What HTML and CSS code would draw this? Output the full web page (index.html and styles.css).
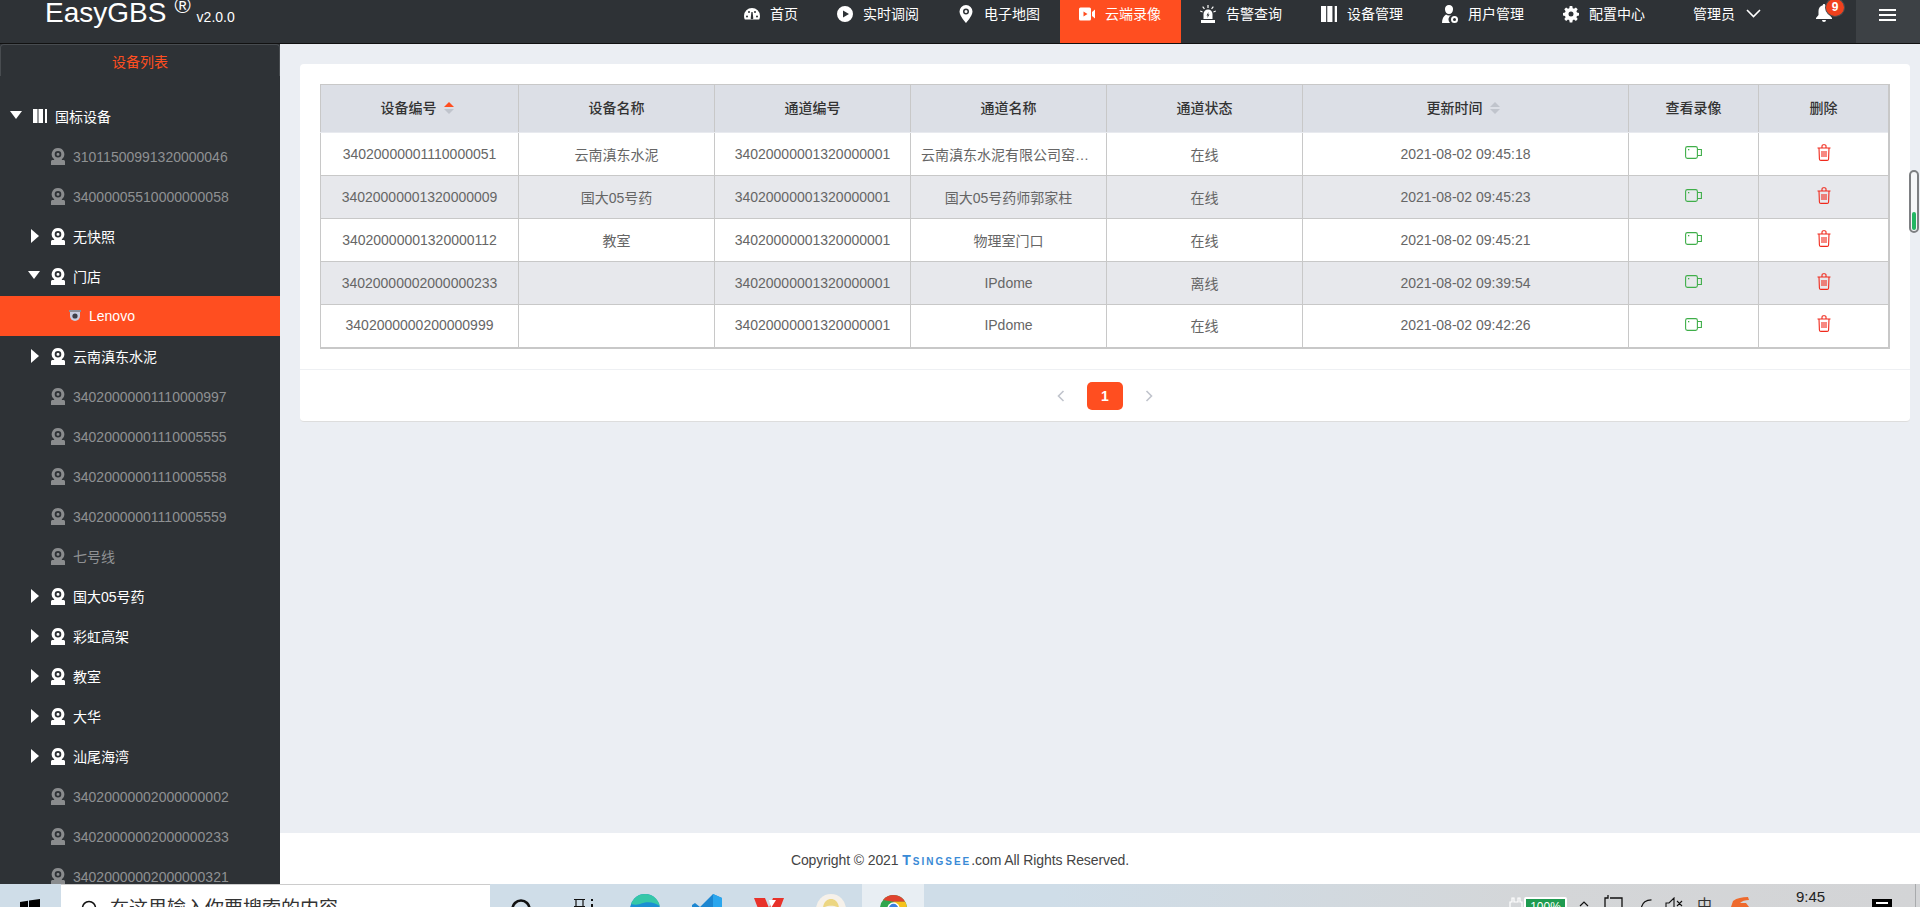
FILE: index.html
```html
<!DOCTYPE html>
<html lang="zh-CN">
<head>
  <meta charset="UTF-8">
  <title>EasyGBS</title>
  <link rel="stylesheet" href="styles.css">
</head>
<body>
  <svg class="defs" width="0" height="0">
    <symbol id="i-gauge" viewBox="0 0 16 16"><path fill-rule="evenodd" d="M8 2a8 8 0 0 0-8 8c0 1.500.3 2.700.8 3.500h14.400c.5-.8.8-2 .8-3.500a8 8 0 0 0-8-8zM3 9.500a1 1 0 1 1 0 2 1 1 0 0 1 0-2zM5 5a1 1 0 1 1 0 2 1 1 0 0 1 0-2zM11 5a1 1 0 1 1 0 2 1 1 0 0 1 0-2zM13 9.500a1 1 0 1 1 0 2 1 1 0 0 1 0-2zM8.600 6l.6 5.500a1.300 1.300 0 1 1-2.400 0L7.400 6z"/></symbol>
    <symbol id="i-play" viewBox="0 0 16 16"><path fill-rule="evenodd" d="M8 0a8 8 0 1 0 0 16A8 8 0 0 0 8 0zM6 4.500l6 3.500-6 3.500z"/></symbol>
    <symbol id="i-pin" viewBox="0 0 14 18"><path fill-rule="evenodd" d="M7 0a6.500 6.500 0 0 0-6.500 6.500C.5 11 7 18 7 18s6.500-7 6.500-11.500A6.500 6.500 0 0 0 7 0zm0 3.500a3 3 0 1 1 0 6 3 3 0 0 1 0-6zm0 1.500a1.500 1.500 0 1 0 0 3 1.500 1.500 0 0 0 0-3z"/></symbol>
    <symbol id="i-video" viewBox="0 0 16 13"><path fill-rule="evenodd" d="M1.500 0h9A1.500 1.500 0 0 1 12 1.500v10a1.500 1.500 0 0 1-1.500 1.500h-9A1.500 1.500 0 0 1 0 11.500v-10A1.500 1.500 0 0 1 1.500 0zM4.500 4v5L8.500 6.500zM13 4.500L16 2v9l-3-2.500z"/></symbol>
    <symbol id="i-alarm" viewBox="0 0 16 18"><path fill-rule="evenodd" d="M8 4.500A4.500 4.500 0 0 0 3.500 9v5h9V9A4.500 4.500 0 0 0 8 4.500zM8.500 7L6.500 10.500h1.300L7.300 13l2.200-3.500H8.200zM1 15h14v3H1zM7.400 0h1.200v3H7.400zM2.200 2l.9-.8 1.800 2.200-.9.8zM13.800 2l-.9-.8-1.800 2.200.9.8zM0 6.500l.4-1.100 2.400 1-.4 1.100zM16 6.500l-.4-1.100-2.400 1 .4 1.100z"/></symbol>
    <symbol id="i-book" viewBox="0 0 14 14"><path d="M0 0h4.500v14H0zM5.500 0h4.500v14H5.500zM12 0h2v14h-2z"/></symbol>
    <symbol id="i-user" viewBox="0 0 16 18"><path fill-rule="evenodd" d="M7 0a4 4 0 0 1 4 4.500C11 7 9.300 9 7 9S3 7 3 4.500A4 4 0 0 1 7 0zM4 9.500c.9.600 1.900 1 3 1 .9 0 1.700-.2 2.400-.6A5 5 0 0 0 8 18H0c0-4 1.500-7 4-8.500zM12.500 11a3.500 3.500 0 1 1 0 7 3.500 3.500 0 0 1 0-7zm0 2a1.500 1.500 0 1 0 0 3 1.500 1.500 0 0 0 0-3z"/></symbol>
    <symbol id="i-gear" viewBox="0 0 16 16"><path fill-rule="evenodd" d="M6.700 0h2.600l.4 2.200 1.300.6L12.900 1.500l1.800 1.800-1.300 1.900.6 1.300 2 .4v2.600l-2 .4-.6 1.300 1.300 1.900-1.800 1.800-1.900-1.300-1.300.6-.4 2.200H6.700l-.4-2.200-1.300-.6-1.900 1.300-1.800-1.800 1.300-1.900-.6-1.300-2-.4V6.900l2-.4.6-1.300-1.300-1.900 1.800-1.800L5 2.800l1.300-.6zM8 5.500a2.500 2.500 0 1 0 0 5 2.500 2.500 0 0 0 0-5z"/></symbol>
    <symbol id="i-cam" viewBox="0 0 14 17"><path fill-rule="evenodd" d="M7 0a6.300 6.300 0 0 1 3.700 11.400l.3.600h1.500c.8 0 1.500.7 1.500 1.500V17H0v-3.500C0 12.700.7 12 1.500 12H3l.3-.6A6.300 6.300 0 0 1 7 0zm0 3a3.300 3.300 0 1 0 0 6.600A3.300 3.300 0 0 0 7 3zm0 1.800a1.500 1.500 0 1 1 0 3 1.500 1.500 0 0 1 0-3z"/></symbol>
    <symbol id="i-rec" viewBox="0 0 17 13"><g fill="none" stroke="currentColor" stroke-width="1.100"><rect x=".6" y=".6" width="11.800" height="11.800" rx="1.800"/><path d="M12.500 3.500h3.900v6h-3.900"/></g><rect x="3" y="3" width="1.300" height="1.300" fill="currentColor"/></symbol>
    <symbol id="i-trash" viewBox="0 0 14 17"><g fill="none" stroke="currentColor" stroke-width="1.100"><path d="M.5 4h13M5 3.800V2a1.300 1.300 0 0 1 1.300-1.300h1.400A1.300 1.300 0 0 1 9 2v1.800"/><path d="M2 4l.4 11a1.500 1.500 0 0 0 1.500 1.400h6.200a1.500 1.500 0 0 0 1.500-1.400L12 4"/><path d="M5 7v6M7 7v6M9 7v6"/></g></symbol>
  </svg>

  <div class="app">
    <header class="topbar">
      <div class="logo">
        <span class="logo-name">EasyGBS</span>
        <span class="logo-reg">®</span>
        <span class="logo-ver">v2.0.0</span>
      </div>
      <nav class="nav">
        <a class="nav-item"><svg class="nav-icon"><use href="#i-gauge"/></svg>首页</a>
        <a class="nav-item"><svg class="nav-icon"><use href="#i-play"/></svg>实时调阅</a>
        <a class="nav-item"><svg class="nav-icon"><use href="#i-pin"/></svg>电子地图</a>
        <a class="nav-item active"><svg class="nav-icon"><use href="#i-video"/></svg>云端录像</a>
        <a class="nav-item"><svg class="nav-icon"><use href="#i-alarm"/></svg>告警查询</a>
        <a class="nav-item"><svg class="nav-icon"><use href="#i-book"/></svg>设备管理</a>
        <a class="nav-item"><svg class="nav-icon"><use href="#i-user"/></svg>用户管理</a>
        <a class="nav-item"><svg class="nav-icon"><use href="#i-gear"/></svg>配置中心</a>
      </nav>
      <div class="admin">管理员
        <svg class="admin-arrow" viewBox="0 0 15 9"><path d="M1 1l6.500 6.500L14 1" fill="none" stroke="#fff" stroke-width="1.600"/></svg>
      </div>
      <div class="bell">
        <svg class="bell-icon" viewBox="0 0 16 18"><path fill="#fff" d="M8 0c.7 0 1.200.5 1.200 1.200C11.800 1.800 13.500 4 13.500 7v4L16 14v1H0v-1l2.500-3V7c0-3 1.700-5.200 4.300-5.800C6.800.5 7.300 0 8 0zM6 16h4a2 2 0 0 1-4 0z"/></svg>
        <span class="badge">9</span>
      </div>
      <div class="burger"><span></span><span></span><span></span></div>
    </header>

    <div class="body-row">
      <aside class="sidebar">
        <div class="side-tab">设备列表</div>
        <ul class="tree" id="tree"></ul>
      </aside>

      <main class="main">
        <div class="content">
          <section class="card">
            <div class="table-wrap">
              <table class="grid">
                <thead>
                  <tr>
                    <th class="c1">设备编号<span class="sort"><i class="up on"></i><i class="down"></i></span></th>
                    <th class="c2">设备名称</th>
                    <th class="c2">通道编号</th>
                    <th class="c2">通道名称</th>
                    <th class="c2">通道状态</th>
                    <th class="c3">更新时间<span class="sort"><i class="up"></i><i class="down"></i></span></th>
                    <th class="c4">查看录像</th>
                    <th>删除</th>
                  </tr>
                </thead>
                <tbody id="rows"></tbody>
              </table>
            </div>
            <div class="pager">
              <svg class="pager-arrow" viewBox="0 0 8 12"><path d="M6.500 1L1.500 6l5 5" fill="none" stroke="#c0c4cc" stroke-width="1.600"/></svg>
              <span class="pager-num">1</span>
              <svg class="pager-arrow" viewBox="0 0 8 12"><path d="M1.500 1l5 5-5 5" fill="none" stroke="#c0c4cc" stroke-width="1.600"/></svg>
            </div>
          </section>
        </div>
        <footer class="footer">Copyright © 2021 <span class="brand">Tsingsee</span>.com All Rights Reserved.</footer>
      </main>
    </div>
    <div class="page-scroll"><span></span></div>
  </div>

  <div class="taskbar">
    <div class="start">
      <svg class="win" viewBox="0 0 20 20"><path d="M0 3l8-1.200V9.500H0zM9 1.600L20 0v9.500H9zM0 10.500h8v7.700L0 17zM9 10.500h11V20L9 18.400z"/></svg>
    </div>
    <div class="search">
      <svg class="search-icon" viewBox="0 0 16 16"><circle cx="8" cy="8" r="6.500" fill="none" stroke="#111" stroke-width="1.500"/></svg>
      在这里输入你要搜索的内容
    </div>
    <div class="task-cell low">
      <svg class="task-icon small" viewBox="0 0 20 20"><circle cx="10" cy="10" r="8.500" fill="none" stroke="#111" stroke-width="2.600"/></svg>
    </div>
    <div class="task-cell low">
      <svg class="task-icon small" viewBox="0 0 20 20"><path d="M1 .5h11M3 .5v7M10 .5v7M1 7.500h11" fill="none" stroke="#111" stroke-width="1.200"/><path d="M18 0h2v2h-2zM18 5h2v3h-2z" fill="#111"/></svg>
    </div>
    <div class="task-cell">
      <svg class="task-icon" viewBox="0 0 30 30"><circle cx="15" cy="15" r="15" fill="#1b8fd2"/><path d="M1 10C4 3 9 0 15 0c8 0 13 5 15 12-6-4-13-5-20-2-3 1-6 1-9 0z" fill="#35c7a8"/></svg>
    </div>
    <div class="task-cell">
      <svg class="task-icon" viewBox="0 0 30 30"><path d="M21 0l9 4v22l-9 4L8 17l-5 4-3-2V11l3-2 5 4z" fill="#1c86d1"/><path d="M21 0l9 4v22l-9 4z" fill="#2aa6ee"/></svg>
    </div>
    <div class="task-cell wps">
      <svg class="task-icon" viewBox="0 0 30 30"><path d="M0 0h11l4 10 4-10h11l-10 26H10z" fill="#e8322a"/><path d="M15 2h7l-5 8z" fill="#fff"/></svg>
    </div>
    <div class="task-cell">
      <svg class="task-icon" viewBox="0 0 30 30"><circle cx="15" cy="15" r="15" fill="#f6f1ea"/><path d="M7 14c1-12 15-12 16 0-4-3-12-3-16 0z" fill="#ecd682"/></svg>
    </div>
    <div class="task-cell current">
      <svg class="task-icon chrome" viewBox="0 0 22 22"><circle cx="11" cy="11" r="11" fill="#2fa64d"/><path d="M11 0a11 11 0 0 1 9.500 5.500H11L2.500 4A11 11 0 0 1 11 0z" fill="#e0432f"/><path d="M20.500 5.500A11 11 0 0 1 11 22l5-9-5-7.500z" fill="#f6c21c"/><circle cx="11" cy="11" r="5" fill="#fff"/><circle cx="11" cy="11" r="3.800" fill="#3c7fe0"/></svg>
    </div>
    <div class="tray">
      <svg class="plug" viewBox="0 0 15 12"><path d="M1 12V5h2V1h2v4h4V1h2v4h2v7" fill="none" stroke="#fff" stroke-width="1.200"/></svg>
      <div class="battery"><span>100%</span></div>
      <svg class="tray-caret" viewBox="0 0 10 6"><path d="M1 5l4-4 4 4" fill="none" stroke="#111" stroke-width="1.200"/></svg>
      <svg class="tray-pc" viewBox="0 0 19 12"><path d="M1 12V3h3V0M6 3h12v9" fill="none" stroke="#111" stroke-width="1.300"/></svg>
      <svg class="tray-wifi" viewBox="0 0 11 8"><path d="M.5 8C1.500 3.500 5 1 10.500.8" fill="none" stroke="#111" stroke-width="1.200"/></svg>
      <svg class="tray-sound" viewBox="0 0 18 10"><path d="M1 10V6h3l5-5v9M12 4l5 5M17 4l-5 5" fill="none" stroke="#111" stroke-width="1.100"/></svg>
      <div class="tray-ime">中</div>
      <svg class="tray-sogou" viewBox="0 0 18 10"><path d="M2 4C6 1 11 0 17 0l1 3c-4 0-7 1-9 3h6l3 4H0z" fill="#ee6a2d"/></svg>
      <div class="clock">9:45</div>
      <div class="notify"><span></span></div>
      <div class="show-desk"></div>
    </div>
  </div>

  <script>
    const treeData = [
      { t: '国标设备', cls: 'root', arrow: 'down', icon: 'i-book', on: true },
      { t: '31011500991320000046', cls: 'num' },
      { t: '34000005510000000058', cls: 'num' },
      { t: '无快照', arrow: 'right', on: true },
      { t: '门店', arrow: 'down', on: true },
      { t: 'Lenovo', cls: 'selected' },
      { t: '云南滇东水泥', arrow: 'right', on: true },
      { t: '34020000001110000997', cls: 'num' },
      { t: '34020000001110005555', cls: 'num' },
      { t: '34020000001110005558', cls: 'num' },
      { t: '34020000001110005559', cls: 'num' },
      { t: '七号线' },
      { t: '国大05号药', arrow: 'right', on: true },
      { t: '彩虹高架', arrow: 'right', on: true },
      { t: '教室', arrow: 'right', on: true },
      { t: '大华', arrow: 'right', on: true },
      { t: '汕尾海湾', arrow: 'right', on: true },
      { t: '34020000002000000002', cls: 'num' },
      { t: '34020000002000000233', cls: 'num' },
      { t: '34020000002000000321', cls: 'num' },
      { t: '34020000002000000999', cls: 'num' }
    ];

    const rowData = [
      ['34020000001110000051', '云南滇东水泥', '34020000001320000001', '云南滇东水泥有限公司窑头监控点', '在线', '2021-08-02 09:45:18'],
      ['34020000001320000009', '国大05号药', '34020000001320000001', '国大05号药师郭家柱', '在线', '2021-08-02 09:45:23'],
      ['34020000001320000112', '教室', '34020000001320000001', '物理室门口', '在线', '2021-08-02 09:45:21'],
      ['34020000002000000233', '', '34020000001320000001', 'IPdome', '离线', '2021-08-02 09:39:54'],
      ['3402000000200000999', '', '34020000001320000001', 'IPdome', '在线', '2021-08-02 09:42:26']
    ];

    document.getElementById('tree').innerHTML = treeData.map(n => {
      const arrow = n.arrow ? `<i class="arrow ${n.arrow}"></i>` : '';
      let icon = `<svg class="tree-icon"><use href="#${n.icon || 'i-cam'}"/></svg>`;
      if (n.cls === 'selected') {
        icon = '<svg class="dome" viewBox="0 0 12 12"><path d="M0 0h12v2H0z" fill="#8b8f99"/><path d="M1 2h10v4a5 5 0 0 1-10 0z" fill="#c9cde0"/><circle cx="6" cy="6" r="2.600" fill="#3c3f48"/></svg>';
      }
      return `<li class="tree-row ${n.cls || ''} ${n.on ? 'on' : ''}">${arrow}${icon}<span>${n.t}</span></li>`;
    }).join('');

    document.getElementById('rows').innerHTML = rowData.map(r => {
      const cells = r.map(v => `<td><div class="cell">${v}</div></td>`).join('');
      return `<tr>${cells}<td><svg class="rec"><use href="#i-rec"/></svg></td><td><svg class="trash"><use href="#i-trash"/></svg></td></tr>`;
    }).join('');
  </script>
</body>
</html>
```

FILE: styles.css
```css
* {
  box-sizing: border-box;
}

html, body {
  margin: 0;
  padding: 0;
  height: 907px;
  overflow: hidden;
}

body {
  font-family: "Liberation Sans", "Noto Sans CJK SC", sans-serif;
  font-size: 14px;
  color: #333;
  background: #ebeef3;
  display: flex;
  flex-direction: column;
}

.defs {
  position: absolute;
}

.app {
  height: 884px;
  display: flex;
  flex-direction: column;
  position: relative;
}

/* top bar */
.topbar {
  height: 44px;
  flex: none;
  background: #2e3236;
  border-bottom: 1px solid #111;
  display: flex;
  color: #fff;
  overflow: hidden;
}

.logo {
  width: 725px;
  padding-left: 45px;
  display: flex;
  align-items: flex-start;
}

.logo-name {
  font-size: 28px;
  line-height: 25px;
}

.logo-reg {
  font-size: 22px;
  line-height: 12px;
  margin-left: 8px;
}

.logo-ver {
  font-size: 14px;
  line-height: 16px;
  margin: 9px 0 0 6px;
}

.nav {
  display: flex;
  width: 939px;
}

.nav-item {
  height: 43px;
  padding: 0 20px 0 19px;
  display: flex;
  align-items: flex-start;
  line-height: 28px;
  color: #fff;
  white-space: nowrap;
}

.nav-item.active {
  background: #ff4e20;
}

.nav-icon {
  width: 16px;
  height: 18px;
  margin: 5px 10px 0 0;
  fill: #fff;
}

.admin {
  width: 152px;
  padding-left: 29px;
  line-height: 28px;
  display: flex;
  align-items: flex-start;
}

.admin-arrow {
  width: 15px;
  height: 9px;
  margin: 9px 0 0 11px;
}

.bell {
  width: 40px;
  position: relative;
}

.bell-icon {
  width: 16px;
  height: 18px;
  margin-top: 4px;
}

.badge {
  position: absolute;
  left: 9px;
  top: -2px;
  width: 20px;
  height: 19px;
  border-radius: 50%;
  background: #f0411d;
  border: 1px solid #4a4d50;
  font-size: 12px;
  font-weight: bold;
  text-align: center;
  line-height: 17px;
}

.burger {
  width: 64px;
  height: 43px;
  background: #3d4145;
  padding: 9px 0 0 23px;
}

.burger span {
  display: block;
  width: 17px;
  height: 2px;
  background: #fff;
  margin-bottom: 3px;
}

.body-row {
  flex: 1;
  display: flex;
  min-height: 0;
}

/* device tree */
.sidebar {
  width: 280px;
  flex: none;
  background: #2e3236;
  overflow: hidden;
}

.side-tab {
  height: 32px;
  border: 1px solid #484c50;
  border-bottom: none;
  border-radius: 4px 4px 0 0;
  color: #ff4e20;
  text-align: center;
  line-height: 34px;
}

.tree {
  list-style: none;
  margin: 20px 0 0;
  padding: 0;
}

.tree-row {
  height: 40px;
  display: flex;
  align-items: center;
  padding-left: 51px;
  color: #8f9193;
  position: relative;
  white-space: nowrap;
}

.tree-row.on {
  color: #fff;
}

.tree-row.num span {
  padding-top: 2px;
}

.tree-icon {
  width: 14px;
  height: 17px;
  margin-right: 8px;
  fill: #8a8c8e;
}

.tree-row.on .tree-icon {
  fill: #fff;
}

.tree-row.root {
  padding-left: 33px;
}

.root .tree-icon {
  height: 14px;
  margin-right: 8px;
}

.tree-row.selected {
  background: #ff4e20;
  color: #fff;
  padding-left: 69px;
}

.dome {
  width: 12px;
  height: 12px;
  margin-right: 8px;
}

.arrow {
  position: absolute;
  width: 0;
  height: 0;
}

.arrow.right {
  left: 31px;
  top: 13px;
  border-left: 8px solid #fff;
  border-top: 7px solid transparent;
  border-bottom: 7px solid transparent;
}

.arrow.down {
  left: 28px;
  top: 15px;
  border-top: 8px solid #fff;
  border-left: 6px solid transparent;
  border-right: 6px solid transparent;
}

.root .arrow.down {
  left: 10px;
}

/* table card */
.main {
  flex: 1;
  min-width: 0;
  display: flex;
  flex-direction: column;
}

.content {
  flex: 1;
  padding: 20px 10px 0 20px;
}

.card {
  background: #fff;
  border-radius: 4px;
  border-bottom: 1px solid #ddd;
  height: 358px;
}

.table-wrap {
  padding: 20px 20px 0;
  height: 305px;
}

.grid {
  width: 100%;
  table-layout: fixed;
  border-collapse: collapse;
  border: 1px solid #c8c8c8;
  border-right-width: 2px;
  border-bottom-width: 2px;
  text-align: center;
}

.grid th {
  height: 48px;
  background: #dcdfe6;
  border: 1px solid #c8c8c8;
  border-bottom: 1px solid #e8eaef;
  font-weight: 500;
  font-size: 14px;
  color: #333;
  padding: 0 0 3px;
}

.grid td {
  height: 43px;
  border: 1px solid #c8c8c8;
  color: #666;
  padding: 0 10px 1px;
}

.grid tbody tr:nth-child(even) td {
  background: #e7e8ec;
}

.c1 {
  width: 198px;
}

.c2 {
  width: 196px;
}

.c3 {
  width: 326px;
}

.c4 {
  width: 130px;
}

.cell {
  white-space: nowrap;
  overflow: hidden;
  text-overflow: ellipsis;
}

.sort {
  display: inline-block;
  vertical-align: middle;
  margin: -2px 5px 0 7px;
}

.sort i {
  display: block;
  width: 0;
  height: 0;
  border-left: 5px solid transparent;
  border-right: 5px solid transparent;
}

.sort .up {
  border-bottom: 5px solid #c0c4cc;
  margin-bottom: 2px;
}

.sort .up.on {
  border-bottom-color: #ff4e20;
}

.sort .down {
  border-top: 5px solid #c0c4cc;
}

.rec {
  width: 17px;
  height: 13px;
  color: #3fae49;
  vertical-align: middle;
  margin-bottom: 3px;
}

.trash {
  width: 14px;
  height: 17px;
  color: #f0291c;
  vertical-align: middle;
  margin-bottom: 3px;
}

.pager {
  border-top: 1px solid #eef0f3;
  height: 52px;
  display: flex;
  justify-content: center;
  align-items: flex-start;
  padding-top: 12px;
  gap: 22px;
}

.pager-arrow {
  width: 8px;
  height: 12px;
  margin-top: 8px;
}

.pager-num {
  width: 36px;
  height: 28px;
  background: #ff4e20;
  border-radius: 5px;
  color: #fff;
  font-weight: bold;
  text-align: center;
  line-height: 28px;
}

.footer {
  height: 51px;
  flex: none;
  background: #fff;
  text-align: center;
  line-height: 54px;
  color: #444;
  padding-right: 280px;
  letter-spacing: -0.1px;
}

.brand {
  font-weight: bold;
  font-size: 14px;
  font-variant: small-caps;
  letter-spacing: 2px;
  color: #3a8ad6;
}

.page-scroll {
  position: absolute;
  right: 1px;
  top: 170px;
  width: 10px;
  height: 63px;
  border: 2px solid #7d7f82;
  border-radius: 5px;
  background: #f6f7f9;
}

.page-scroll span {
  position: absolute;
  left: 1px;
  bottom: 1px;
  width: 4px;
  height: 18px;
  border-radius: 2px;
  background: #22b562;
}

/* windows taskbar, cut off by the window edge */
.taskbar {
  height: 23px;
  flex: none;
  background: linear-gradient(90deg, #cfdde8 0%, #cfdde8 55%, #d4d6d8 80%, #d3d4d6 100%);
  display: flex;
  align-items: flex-start;
  overflow: hidden;
}

.start {
  width: 61px;
  padding: 15px 0 0 20px;
}

.win {
  width: 20px;
  height: 20px;
  display: block;
  fill: #000;
}

.search {
  width: 429px;
  height: 40px;
  background: #fff;
  border-top: 1px solid #ccc;
  font-size: 19px;
  line-height: 48px;
  color: #333;
  white-space: nowrap;
  display: flex;
  align-items: flex-start;
  padding-left: 20px;
}

.search-icon {
  width: 16px;
  height: 16px;
  margin: 15px 13px 0 0;
  flex: none;
}

.task-cell {
  width: 62px;
  height: 40px;
  padding-top: 10px;
  display: flex;
  justify-content: center;
}

.task-cell.low {
  padding-top: 15px;
}

.task-cell.wps {
  padding-top: 14px;
}

.task-cell.current {
  background: #e8eef3;
}

.task-icon {
  width: 30px;
  height: 30px;
}

.task-icon.small {
  width: 20px;
  height: 20px;
}

.task-icon.chrome {
  width: 27px;
  height: 27px;
  margin-top: 1px;
}

.tray {
  flex: 1;
  display: flex;
  align-items: flex-start;
  position: relative;
  height: 23px;
}

.plug {
  width: 15px;
  height: 12px;
  margin: 13px 0 0 585px;
}

.battery {
  width: 43px;
  height: 20px;
  margin: 13px 0 0 0;
  border: 2px solid #fff;
  border-radius: 2px;
  background: #1e9b50;
  color: #fff;
  font-size: 12px;
  line-height: 16px;
  text-align: center;
  flex: none;
}

.tray-caret {
  width: 10px;
  height: 6px;
  margin: 17px 0 0 12px;
}

.tray-pc {
  width: 19px;
  height: 12px;
  margin: 11px 0 0 15px;
}

.tray-wifi {
  width: 11px;
  height: 8px;
  margin: 15px 0 0 18px;
}

.tray-sound {
  width: 18px;
  height: 10px;
  margin: 13px 0 0 13px;
}

.tray-ime {
  width: 16px;
  margin: 12px 0 0 14px;
  color: #333;
  font-size: 15px;
  line-height: 18px;
}

.tray-sogou {
  width: 18px;
  height: 10px;
  margin: 13px 0 0 18px;
}

.clock {
  font-size: 15px;
  line-height: 18px;
  margin: 4px 0 0 47px;
  color: #222;
}

.notify {
  width: 20px;
  height: 20px;
  background: #000;
  margin: 15px 0 0 47px;
  padding: 3px 4px 0;
}

.notify span {
  display: block;
  height: 2px;
  background: #fff;
}

.show-desk {
  position: absolute;
  right: 4px;
  top: 0;
  width: 1px;
  height: 23px;
  background: #a8aaac;
}
```
